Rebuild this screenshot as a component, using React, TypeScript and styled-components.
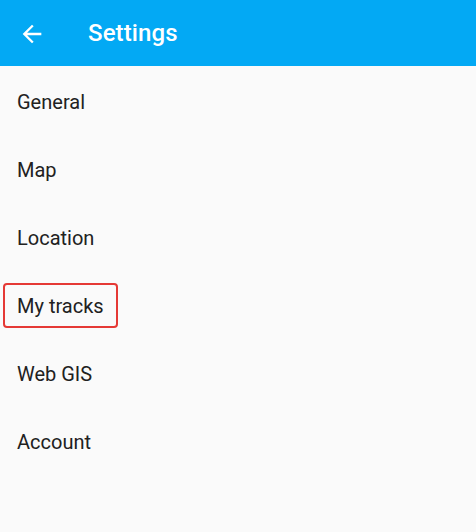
import React from "react";
import styled, { createGlobalStyle } from "styled-components";

const Global = createGlobalStyle`
  html, body { margin: 0; padding: 0; background: #fafafa; }
  body { font-family: Roboto, "Noto Sans", "Liberation Sans", sans-serif; }
`;

const Page = styled.div`
  width: 476px;
  height: 532px;
  background: #fafafa;
  display: flex;
  flex-direction: column;
`;

const AppBar = styled.header`
  height: 66px;
  background: #03a9f4;
  display: flex;
  align-items: center;
  padding-left: 18px;
  box-sizing: border-box;
`;

const BackButton = styled.div`
  width: 28px;
  height: 28px;
  display: flex;
  color: #fff;
  margin-top: 2px;
`;

const Title = styled.h1`
  margin: 0 0 0 42px;
  font-size: 24px;
  font-weight: 500;
  color: #fff;
  letter-spacing: 0.1px;
`;

const List = styled.ul`
  list-style: none;
  margin: 0;
  padding: 0;
`;

const Item = styled.li`
  position: relative;
  height: 68px;
  display: flex;
  align-items: center;
  padding-left: 17px;
  padding-top: 4px;
  box-sizing: border-box;
  font-size: 20px;
  color: #212121;
`;

const Highlight = styled.span`
  position: absolute;
  left: 3px;
  top: 13px;
  width: 115px;
  height: 45px;
  border: 2.5px solid #e53935;
  border-radius: 4px;
  box-sizing: border-box;
`;

const items = ["General", "Map", "Location", "My tracks", "Web GIS", "Account"];

export default function App() {
  return (
    <Page>
      <Global />
      <AppBar>
        <BackButton>
          <svg width="28" height="28" viewBox="0 0 24 24" fill="currentColor">
            <path d="M20 11H7.83l5.59-5.59L12 4l-8 8 8 8 1.41-1.41L7.83 13H20v-2z" />
          </svg>
        </BackButton>
        <Title>Settings</Title>
      </AppBar>
      <List>
        {items.map((it) => (
          <Item key={it}>
            {it}
            {it === "My tracks" && <Highlight />}
          </Item>
        ))}
      </List>
    </Page>
  );
}
